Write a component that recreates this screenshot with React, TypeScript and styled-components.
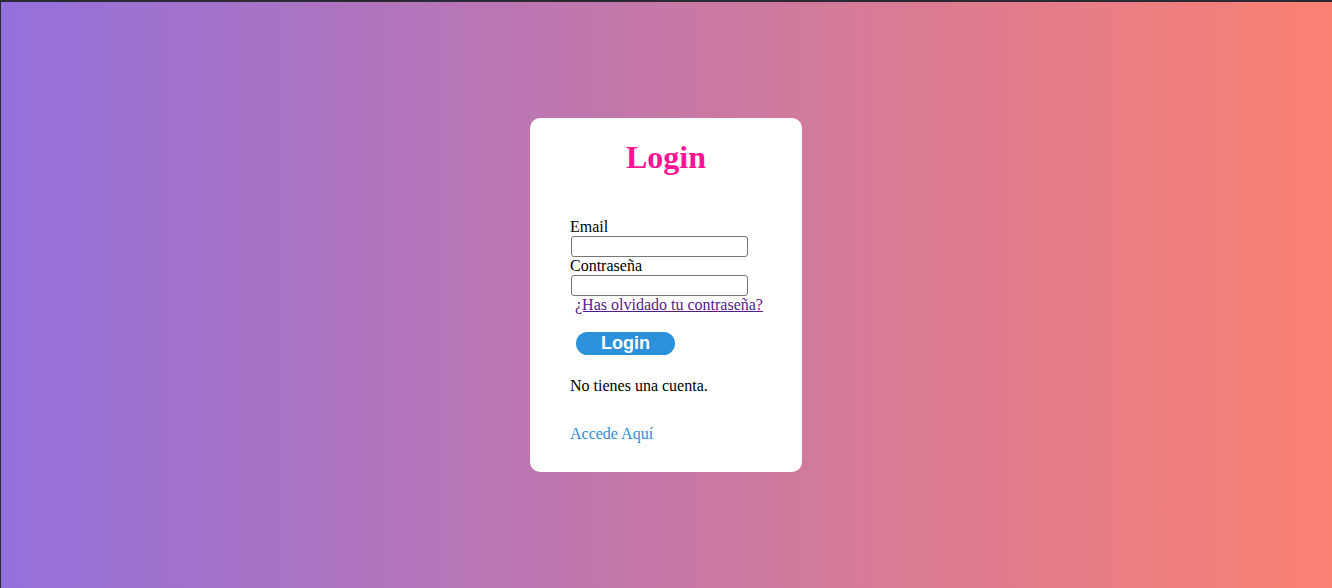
import React from "react";
import styled, { createGlobalStyle } from "styled-components";

const Global = createGlobalStyle`
  html, body { margin: 0; padding: 0; }
  body { font-family: "Liberation Serif", "Times New Roman", serif; font-size: 16px; }
`;

const Page = styled.div`
  box-sizing: border-box;
  height: 588px;
  border-top: 2px solid #2a2a35;
  box-shadow: inset 1px 0 0 #2a2a35;
  background: linear-gradient(to right, #9370db, #fa8072);
  display: flex;
  align-items: center;
  justify-content: center;
`;

const Card = styled.div`
  box-sizing: border-box;
  width: 272px;
  height: 354px;
  background: #ffffff;
  border-radius: 10px;
  padding: 0 20px 0 40px;
  display: flex;
  flex-direction: column;
`;

const Title = styled.h1`
  margin: 21px 0 0 -20px;
  font-size: 32px;
  font-weight: bold;
  color: #ff1493;
  text-align: center;
  line-height: 37px;
`;

const Form = styled.form`
  margin-top: 42px;
  display: flex;
  flex-direction: column;
  align-items: flex-start;
`;

const Label = styled.label`
  display: block;
  color: #000;
  line-height: 18px;
  height: 18px;
`;

const Input = styled.input`
  box-sizing: border-box;
  width: 177px;
  height: 21px;
  margin: 0 0 0 1px;
  border: 1px solid #767676;
  border-radius: 3px;
  padding: 1px 2px;
  background: #fff;
`;

const Forgot = styled.a`
  display: block;
  margin-left: 5px;
  color: #551a8b;
  line-height: 18px;
  text-decoration: underline;
`;

const Button = styled.button`
  box-sizing: border-box;
  margin: 18px 0 0 6px;
  width: 99px;
  height: 23px;
  border: none;
  border-radius: 12px;
  background: #2b91db;
  color: #ffffff;
  font-family: "Liberation Sans", Arial, sans-serif;
  font-weight: bold;
  font-size: 18px;
  line-height: 23px;
  padding: 0;
`;

const Text = styled.p`
  margin: 22px 0 0;
  line-height: 18px;
  color: #000;
`;

const Access = styled.a`
  margin-top: 30px;
  line-height: 18px;
  color: #2e8dd8;
  text-decoration: none;
`;

export default function App() {
  return (
    <>
      <Global />
      <Page>
        <Card>
          <Title>Login</Title>
          <Form onSubmit={(e) => e.preventDefault()}>
            <Label htmlFor="email">Email</Label>
            <Input id="email" type="email" />
            <Label htmlFor="pass">Contraseña</Label>
            <Input id="pass" type="password" />
            <Forgot href="#">¿Has olvidado tu contraseña?</Forgot>
            <Button type="submit">Login</Button>
          </Form>
          <Text>No tienes una cuenta.</Text>
          <Access href="#">Accede Aquí</Access>
        </Card>
      </Page>
    </>
  );
}
